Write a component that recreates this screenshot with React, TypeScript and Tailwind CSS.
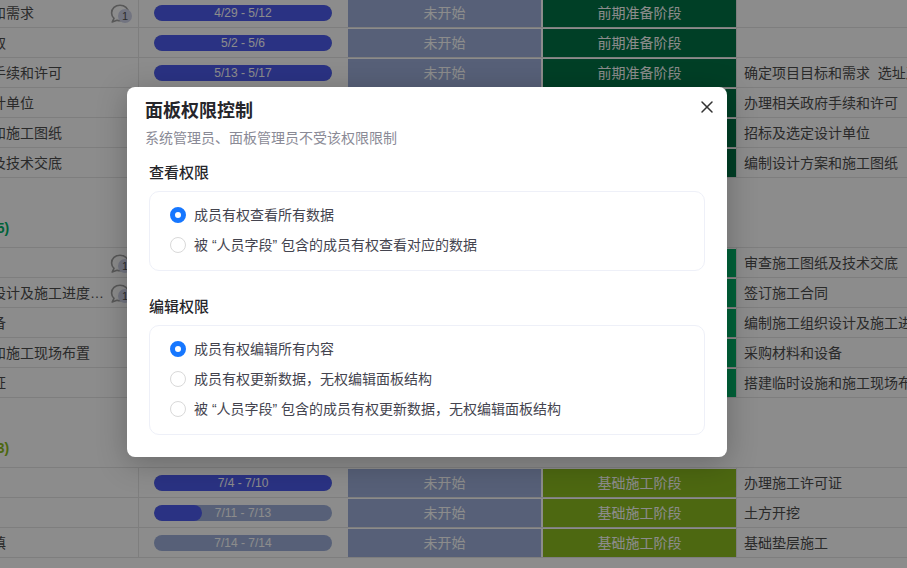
import { X } from 'lucide-react'

interface Task {
  name: string
  date: string
  progress: number
  note: string
  comment?: boolean
}

interface Group {
  title: string
  titleColor: string
  phase: string
  phaseColor: string
  tasks: Task[]
}

const groups: Group[] = [
  {
    title: '前期准备阶段(6)',
    titleColor: 'text-[#007346]',
    phase: '前期准备阶段',
    phaseColor: 'bg-[#007346]',
    tasks: [
      { name: '确定项目目标和需求', date: '4/29 - 5/12', progress: 100, note: '', comment: true },
      { name: '选址及土地获取', date: '5/2 - 5/6', progress: 100, note: '' },
      { name: '办理相关政府手续和许可', date: '5/13 - 5/17', progress: 100, note: '确定项目目标和需求  选址及土地获取' },
      { name: '招标及选定设计单位', date: '5/18 - 5/24', progress: 100, note: '办理相关政府手续和许可' },
      { name: '编制设计方案和施工图纸', date: '5/25 - 6/8', progress: 100, note: '招标及选定设计单位' },
      { name: '审查施工图纸及技术交底', date: '6/9 - 6/13', progress: 100, note: '编制设计方案和施工图纸' },
    ],
  },
  {
    title: '施工准备阶段(5)',
    titleColor: 'text-[#00b368]',
    phase: '施工准备阶段',
    phaseColor: 'bg-[#00b368]',
    tasks: [
      { name: '施工图纸会审', date: '6/14 - 6/17', progress: 100, note: '审查施工图纸及技术交底', comment: true },
      { name: '编制施工组织设计及施工进度计划', date: '6/18 - 6/21', progress: 100, note: '签订施工合同', comment: true },
      { name: '采购材料和设备', date: '6/22 - 6/27', progress: 100, note: '编制施工组织设计及施工进度计划' },
      { name: '搭建临时设施和施工现场布置', date: '6/28 - 7/1', progress: 100, note: '采购材料和设备' },
      { name: '办理施工许可证', date: '7/2 - 7/3', progress: 100, note: '搭建临时设施和施工现场布置' },
    ],
  },
  {
    title: '基础施工阶段(3)',
    titleColor: 'text-[#8cbd20]',
    phase: '基础施工阶段',
    phaseColor: 'bg-[#8cbd20]',
    tasks: [
      { name: '施工放线', date: '7/4 - 7/10', progress: 100, note: '办理施工许可证' },
      { name: '土方开挖', date: '7/11 - 7/13', progress: 27, note: '土方开挖' },
      { name: '基础垫层与回填', date: '7/14 - 7/14', progress: 0, note: '基础垫层施工' },
    ],
  },
]

function CommentBadge() {
  return (
    <svg className="absolute right-[5px] top-[6px]" width="23" height="20" viewBox="0 0 23 20">
      <path
        d="M2.2 18 L4 14.4 C2.4 12.9 1.6 11 1.6 9 C1.6 4.6 5.2 1.2 10 1.2 C14.8 1.2 18.4 4.6 18.4 9 C18.4 13.4 14.8 16.8 10 16.8 C8.9 16.8 7.9 16.6 7 16.3 Z"
        fill="none"
        stroke="#a0a0a0"
        strokeWidth="1.6"
        strokeLinejoin="round"
      />
      <circle cx="15" cy="12" r="7" fill="#d0d4ea" />
      <text x="15" y="16" textAnchor="middle" fontSize="11" fill="#555555" fontFamily="Liberation Sans">
        1
      </text>
    </svg>
  )
}

function Row({ task, group }: { task: Task; group: Group }) {
  return (
    <div className="flex h-[30px] border-b border-[#e6e6e6] text-sm text-[#4d4d4d]">
      <div className="relative flex w-[231px] shrink-0 items-center border-r border-[#e6e6e6] pr-[32px]">
        <span className="truncate">{task.name}</span>
        {task.comment && <CommentBadge />}
      </div>
      <div className="flex w-[209px] shrink-0 items-center px-[15px] pr-[16px]">
        <div className="relative h-4 w-full overflow-hidden rounded-full bg-[#9eb0da]">
          <div className="h-full rounded-full bg-[#4d5bef]" style={{ width: `${task.progress}%` }}></div>
          <div className="absolute inset-0 flex items-center justify-center text-xs text-white">{task.date}</div>
        </div>
      </div>
      <div className="mt-px flex w-[193px] shrink-0 items-center justify-center bg-[#9eb0da] text-white">未开始</div>
      <div className={`mt-px ml-[2px] flex w-[193px] shrink-0 items-center justify-center text-white ${group.phaseColor}`}>
        {group.phase}
      </div>
      <div className="flex-1 whitespace-pre border-l border-[#e6e6e6] pl-[7px] leading-[30px]">{task.note}</div>
    </div>
  )
}

function RadioRow({ label, checked }: { label: string; checked?: boolean }) {
  return (
    <div className="flex h-[30px] items-center gap-2 text-sm text-[#44444f]">
      {checked ? (
        <span className="h-4 w-4 rounded-full border-[5px] border-[#1677ff] bg-white"></span>
      ) : (
        <span className="h-4 w-4 rounded-full border border-[#d9d9d9] bg-white"></span>
      )}
      <span>{label}</span>
    </div>
  )
}

function PermissionModal() {
  return (
    <div className="absolute left-[127px] top-[87px] h-[370px] w-[600px] rounded-lg bg-white shadow-[0_6px_30px_rgba(0,0,0,0.25)]">
      <X className="absolute right-[10px] top-[10px] h-5 w-5 text-[#333333]" strokeWidth={1.8} />
      <div className="px-[18px] pt-[10px]">
        <h2 className="text-lg font-bold leading-[28px] text-[#26262b]">面板权限控制</h2>
        <p className="mt-[2px] text-sm leading-[22px] text-[#8a8a96]">系统管理员、面板管理员不受该权限限制</p>
      </div>
      <div className="px-[22px]">
        <h3 className="mt-[12px] text-[15px] font-medium leading-[24px] text-[#26262b]">查看权限</h3>
        <div className="mt-[6px] rounded-[10px] border border-[#eef0f8] px-5 pt-[8px] pb-[10px]">
          <RadioRow label="成员有权查看所有数据" checked />
          <RadioRow label="被 “人员字段” 包含的成员有权查看对应的数据" />
        </div>
        <h3 className="mt-[24px] text-[15px] font-medium leading-[24px] text-[#26262b]">编辑权限</h3>
        <div className="mt-[6px] rounded-[10px] border border-[#eef0f8] px-5 pt-[8px] pb-[10px]">
          <RadioRow label="成员有权编辑所有内容" checked />
          <RadioRow label="成员有权更新数据，无权编辑面板结构" />
          <RadioRow label="被 “人员字段” 包含的成员有权更新数据，无权编辑面板结构" />
        </div>
      </div>
    </div>
  )
}

export default function App() {
  return (
    <div className="relative h-[568px] w-[907px] overflow-hidden bg-white font-['Liberation_Sans','Noto_Sans_CJK_SC',sans-serif]">
      {/* Table, scrolled sideways and down */}
      <div className="-mt-[2px] -ml-[92px] w-[1100px]">
        {groups.map((group, index) => (
          <div key={group.title}>
            {index > 0 && (
              <div className={`flex h-[70px] items-end border-b border-[#e6e6e6] pb-[9px] text-sm font-bold leading-[20px] ${group.titleColor}`}>
                {group.title}
              </div>
            )}
            {group.tasks.map((task) => (
              <Row key={task.name} task={task} group={group} />
            ))}
          </div>
        ))}
      </div>

      {/* Dimmed backdrop */}
      <div className="absolute inset-0 bg-black/45"></div>

      <PermissionModal />
    </div>
  )
}
